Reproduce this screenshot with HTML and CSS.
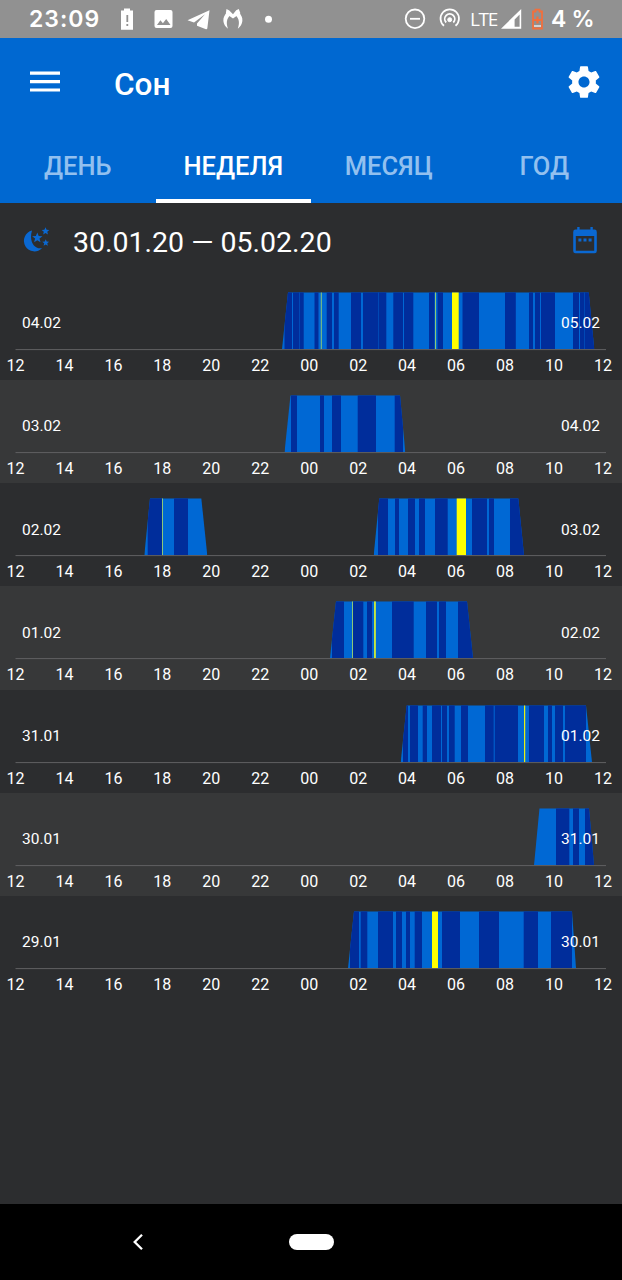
FILE: index.html
```html
<!DOCTYPE html>
<html lang="ru">
<head>
  <meta charset="UTF-8">
  <title>Сон</title>
  <link rel="stylesheet" href="styles.css">
</head>
<body>
  <div class="statusbar">
    <span class="clock">23:09</span>
    <svg class="status-icons" width="160" height="38" viewBox="0 0 160 38" fill="#fff">
      <path fill-rule="evenodd" d="M6 10.500h3V8.500h6v2h3v19.300H6V10.500zM11.400 15v7h1.800v-7zM11.400 24v2h1.800V24z"/>
      <path fill-rule="evenodd" d="M41.500 10h14q2 0 2 2v14q0 2-2 2h-14q-2 0-2-2V12q0-2 2-2zM42 25h13.500l-4.300-6-3.300 4.200-2.500-2.900z"/>
      <path d="M94.500 10.300L72.500 20.200l6.500 2.300 11-8.300-8 9.300v2.300l9 3.500q1 .2 1.300-.8z"/>
      <path d="M111.500 9l2.800 1.500 3.700 3.800 3.200-4 2.600-1.300 1.600 4.200-7.400 5.300-7.200-5z"/>
      <path d="M113 28.700c-5.500-4-6.500-11.500-.8-16.500l3.200 3c-4 3.500-4.400 8-2.400 13.500zM122.800 28.700c5.500-4 6.500-11.500.8-16.500l-3.200 3c4 3.500 4.400 8 2.400 13.500z"/>
      <circle cx="153.500" cy="19.200" r="3.500"/>
    </svg>
    <svg class="signal-icons" width="64" height="38" viewBox="0 0 64 38" fill="none" stroke="#fff" stroke-width="1.800">
      <circle cx="14" cy="18.800" r="9.300"/>
      <path d="M9 18.800h10"/>
      <path d="M43 25.700a9.200 9.200 0 1 1 11.500 0M45.200 22.500a5 5 0 1 1 7.100 0"/>
      <circle cx="48.700" cy="19.700" r="2" fill="#fff" stroke-width="1"/>
    </svg>
    <span class="network">LTE</span>
    <svg class="battery-icons" width="46" height="38" viewBox="0 0 46 38">
      <path fill="#fff" fill-rule="evenodd" d="M20.200 9v19.700H0zM18.600 14.500l-5 5v7.200h5z"/>
      <path fill="none" stroke="#f26f3c" stroke-width="1.800" d="M32 11.500h2.500V9.700h4v1.800H41v17h-9z"/>
      <path fill="#f26f3c" d="M35.400 16.500h2.200v2.400H40v2.200h-2.400v2.400h-2.200v-2.400H33v-2.200h2.400z"/>
      <path fill="#fff" d="M33 25.400h7v1.200h-7z"/>
    </svg>
    <span class="percent">4 %</span>
  </div>

  <header class="header">
    <div class="toolbar">
      <svg class="menu" width="30" height="22" viewBox="0 0 30 22" fill="#fff">
        <path d="M0 .6h30v3.200H0zM0 9h30v3.200H0zM0 17.400h30v3.200H0z"/>
      </svg>
      <h1 class="title">Сон</h1>
      <svg class="gear" width="38" height="38" viewBox="0 0 24 24" fill="#fff">
        <path d="M19.430 12.980c.04-.32.07-.64.07-.98s-.03-.66-.07-.98l2.110-1.650c.19-.15.24-.42.12-.64l-2-3.460c-.12-.22-.39-.3-.61-.22l-2.490 1c-.52-.4-1.080-.73-1.690-.98l-.38-2.650C14.460 2.180 14.250 2 14 2h-4c-.25 0-.46.18-.49.42l-.38 2.650c-.61.25-1.170.59-1.690.98l-2.490-1c-.23-.09-.49 0-.61.22l-2 3.460c-.13.22-.07.49.12.64l2.110 1.650c-.04.32-.07.65-.07.98s.03.66.07.98l-2.110 1.650c-.19.15-.24.42-.12.64l2 3.460c.12.22.39.3.61.22l2.490-1c.52.4 1.080.73 1.690.98l.38 2.650c.03.24.24.42.49.42h4c.25 0 .46-.18.49-.42l.38-2.650c.61-.25 1.170-.59 1.690-.98l2.490 1c.23.09.49 0 .61-.22l2-3.460c.12-.22.07-.49-.12-.64l-2.110-1.650zM12 15.500c-1.930 0-3.500-1.570-3.500-3.500s1.570-3.500 3.500-3.500 3.500 1.570 3.500 3.500-1.570 3.500-3.500 3.500z"/>
      </svg>
    </div>
    <nav class="tabs">
      <div class="tab">ДЕНЬ</div>
      <div class="tab active">НЕДЕЛЯ</div>
      <div class="tab">МЕСЯЦ</div>
      <div class="tab">ГОД</div>
    </nav>
  </header>

  <div class="period">
    <svg width="28" height="28" viewBox="0 0 28 28" fill="#0a68d2">
      <path d="M9 4.500A10.600 10.600 0 1 0 19.300 22C12 23.800 5.500 16 9 4.500z"/>
      <path d="M14.300 6.500l1.400 3.500 3.800.2-3 2.400 1 3.700-3.200-2.100-3.200 2.100 1-3.700-3-2.400 3.800-.2z"/>
      <path d="M22.500 1.200l1.100 2.500 2.700.2-2 1.800.6 2.700-2.400-1.500-2.300 1.500.6-2.700-2.100-1.800 2.700-.2z"/>
      <path d="M22.700 13.300l1 2.200 2.400.2-1.800 1.600.5 2.400-2.100-1.300-2.100 1.300.6-2.400-1.900-1.600 2.500-.2z"/>
    </svg>
    <span class="range">30.01.20 — 05.02.20</span>
    <svg class="calendar" width="24" height="28" viewBox="0 0 24 28" fill="#0a68d2">
      <path fill-rule="evenodd" d="M4.200 0h2.400v2.600h10.800V0h2.400v2.600h1.700q2.300 0 2.300 2.300v19q0 2.300-2.300 2.300h-19Q.2 26.200.2 23.900v-19q0-2.300 2.300-2.300h1.700zM2.800 9v14.700h18.400V9z"/>
      <path d="M5.400 11.500h3v3h-3zM10.500 11.500h3v3h-3zM15.600 11.500h3v3h-3z"/>
    </svg>
  </div>

  <main class="days" id="days">
    <!-- rows are built in sleep.js -->
  </main>

  <footer class="navbar">
    <svg width="12" height="18" viewBox="0 0 12 18" fill="none" stroke="#fff" stroke-width="2.300">
      <path d="M10 1.800L2.700 9l7.300 7.200"/>
    </svg>
    <div class="home"></div>
  </footer>

  <script src="sleep.js"></script>
</body>
</html>
```
FILE: styles.css
```css
* {
  box-sizing: border-box;
}

body {
  margin: 0;
  width: 622px;
  height: 1280px;
  display: flex;
  flex-direction: column;
  overflow: hidden;
  background: #2c2d2f;
  color: #fff;
  font-family: Roboto, "Liberation Sans", sans-serif;
}

svg {
  display: block;
  flex: none;
}

.statusbar {
  height: 38px;
  flex: none;
  display: flex;
  align-items: center;
  padding-left: 29px;
  background: #919191;
  white-space: nowrap;
}

.clock {
  width: 86px;
  font: 600 23px Inter, sans-serif;
  letter-spacing: 1px;
}

.signal-icons {
  margin-left: 126px;
}

.network {
  width: 35px;
  margin-left: 5px;
  font: 400 19px "Open Sans", sans-serif;
  letter-spacing: -1.300px;
}

.battery-icons {
  margin-left: -4px;
}

.percent {
  margin-left: 4px;
  font: 600 23px Inter, sans-serif;
  letter-spacing: -0.300px;
}

.header {
  height: 165px;
  flex: none;
  display: flex;
  flex-direction: column;
  background: #0068d1;
}

.toolbar {
  height: 89px;
  display: flex;
  align-items: center;
  padding: 0 19px 0 29.500px;
}

.menu {
  margin-bottom: 2px;
}

.gear {
  margin-bottom: 1px;
}

.title {
  flex: 1;
  margin: 3px 0 0 54.500px;
  font-size: 31.500px;
  font-weight: 500;
}

.tabs {
  flex: 1;
  display: flex;
}

.tab {
  flex: 1;
  padding-top: 1px;
  border-bottom: 4px solid transparent;
  text-align: center;
  font-size: 25.500px;
  line-height: 76px;
  height: 76px;
  color: #92c0ef;
  font-weight: 500;
}

.active {
  border-color: #fff;
  color: #fff;
}

.period {
  height: 73.800px;
  flex: none;
  display: flex;
  align-items: center;
  padding: 0 25px 0 23px;
}

.range {
  flex: 1;
  padding: 5px 0 0 22px;
  font-size: 28.500px;
}

.calendar {
  margin-top: 2px;
}

.day {
  position: relative;
  height: 103.200px;
}

.day:nth-child(even) {
  background: #373839;
}

.chart {
  height: 78px;
}

.baseline {
  stroke: #606163;
}

.light {
  fill: #0068d4;
}

.deep {
  fill: #002d9b;
}

.dim {
  fill: #0048b5;
}

.awake {
  fill: #ffff00;
}

.brief {
  fill: #8cc878;
}

/* dates lie over the chart */
.date {
  position: absolute;
  top: 36.500px;
  font-size: 15.500px;
  line-height: 20px;
}

.from {
  left: 22px;
}

.to {
  right: 22px;
}

.hours {
  display: flex;
  margin: 0 -5.400px 0 -9px;
  font-size: 16px;
  line-height: 22px;
  text-align: center;
}

.hours span {
  flex: 1;
}

.navbar {
  height: 76px;
  flex: none;
  display: flex;
  align-items: center;
  margin-top: auto;
  padding-left: 132px;
  background: #000;
}

.home {
  width: 45px;
  height: 16px;
  margin-left: 145px;
  border-radius: 8px;
  background: #fff;
}
```
FILE: sleep.js
```js
const TOP = 15.3;
const BOTTOM = 72.2;

// shape: bottom left, top left, top right, bottom right
// everything inside a shape that is not listed is light sleep
const days = [
  {
    from: '04.02', to: '05.02',
    sleeps: [{
      shape: [282, 288, 588.7, 594.3],
      deep: [[284.5, 292], [293, 303.7], [314.5, 318.5], [326.7, 332], [334, 338.7], [351, 361], [363, 386.3],
        [393.3, 403], [404, 413.3], [429, 434.5], [437.5, 443], [462.5, 479], [505, 515.8], [529, 533],
        [535, 540], [541, 555], [573, 579], [580, 595]],
      dim: [[299, 300], [378, 379], [584, 585]],
      brief: [[320.8, 321.8], [435, 436]],
      awake: [[452, 458.7]]
    }]
  },
  {
    from: '03.02', to: '04.02',
    sleeps: [{
      shape: [284.5, 290.5, 400, 405.3],
      deep: [[291, 297], [320, 324], [332, 341], [357.7, 376], [394.7, 403]]
    }]
  },
  {
    from: '02.02', to: '03.02',
    sleeps: [{
      shape: [144.3, 150, 201.3, 207.3],
      deep: [[147.7, 162], [174, 188]],
      brief: [[162, 163]]
    }, {
      shape: [373.7, 379.3, 518.3, 524],
      deep: [[378, 388], [395, 399], [408, 415], [419, 425], [435, 447.7], [472, 487], [489, 494], [510, 524]],
      awake: [[456.7, 466]]
    }]
  },
  {
    from: '01.02', to: '02.02',
    sleeps: [{
      shape: [330, 336, 467, 473],
      deep: [[332, 344], [353, 363.3], [367, 372], [392, 413.7], [426, 437], [439, 446], [458, 473]],
      brief: [[352, 353], [374, 376]],
      awake: [[374.5, 375.3]]
    }]
  },
  {
    from: '31.01', to: '01.02',
    sleeps: [{
      shape: [400.7, 406.7, 586, 592],
      deep: [[403, 408], [410, 418], [422.7, 427], [432, 441], [442, 447], [449, 454.7], [461, 468],
        [485, 493.7], [494.7, 518], [529, 544], [548, 552], [555, 563], [565, 586]],
      awake: [[524.1, 525.2]]
    }]
  },
  {
    from: '30.01', to: '31.01',
    sleeps: [{
      shape: [534, 539.5, 589, 594],
      deep: [[556, 569.3], [573, 579], [585, 594]]
    }]
  },
  {
    from: '29.01', to: '30.01',
    sleeps: [{
      shape: [348, 354, 572, 576],
      deep: [[350, 359], [360.7, 367.3], [378, 393], [396, 402], [406, 410], [414.7, 422], [442, 460],
        [479, 499], [523.7, 538], [551, 572]],
      awake: [[432, 438]]
    }]
  }
];

function bars(list, type) {
  return (list || []).map(([a, b]) =>
    `<rect class="${type}" x="${a}" y="${TOP}" width="${b - a}" height="${BOTTOM - TOP}"/>`).join('');
}

function drawSleep(sleep, id) {
  const [bl, tl, tr, br] = sleep.shape;
  return `
    <clipPath id="${id}"><polygon points="${bl},${BOTTOM} ${tl},${TOP} ${tr},${TOP} ${br},${BOTTOM}"/></clipPath>
    <g clip-path="url(#${id})">
      ${bars([[bl, br]], 'light')}
      ${bars(sleep.deep, 'deep')}
      ${bars(sleep.dim, 'dim')}
      ${bars(sleep.brief, 'brief')}
      ${bars(sleep.awake, 'awake')}
    </g>`;
}

let hours = '';
for (let h = 12; h <= 36; h += 2) {
  hours += `<span>${String(h % 24).padStart(2, '0')}</span>`;
}

document.getElementById('days').innerHTML = days.map((day, i) => `
  <section class="day">
    <svg class="chart" width="622" height="78" viewBox="0 0 622 78">
      ${day.sleeps.map((s, n) => drawSleep(s, `sleep-${i}-${n}`)).join('')}
      <path class="baseline" d="M15.500 72.600H606"/>
    </svg>
    <span class="date from">${day.from}</span>
    <span class="date to">${day.to}</span>
    <div class="hours">${hours}</div>
  </section>`).join('');
```
